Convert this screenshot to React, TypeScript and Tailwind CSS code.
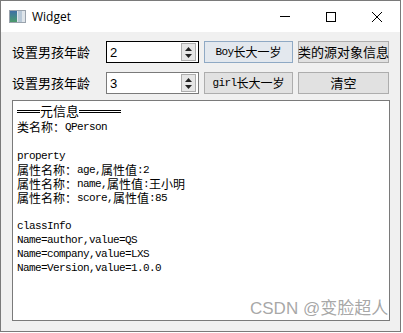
import { FC } from "react";

const SpinBox: FC<{ value: string; focused?: boolean }> = ({ value, focused }) => (
    <div className={`w-[93px] h-[22px] bg-white border flex items-center justify-between pl-[3px] pr-[2px] ${focused ? "border-black" : "border-[#7a7a7a]"}`}>
        <span className="text-[13px] font-['Liberation_Sans',sans-serif] text-black leading-none">{value}</span>
        <div className="w-[15px] h-[18px] border border-[#adadad] bg-[#e6e6e6] flex flex-col items-center justify-center gap-[3px]">
            <svg width="7" height="4" viewBox="0 0 7 4"><path d="M3.5 0 L7 4 L0 4 Z" fill="#222" /></svg>
            <svg width="7" height="4" viewBox="0 0 7 4"><path d="M0 0 L7 0 L3.5 4 Z" fill="#222" /></svg>
        </div>
    </div>
);

const Btn: FC<{ children: React.ReactNode; w: string; primary?: boolean }> = ({ children, w, primary }) => (
    <div className={`${w} h-[22px] border flex items-center justify-center text-black whitespace-nowrap ${primary ? "border-[#8fa9c4] bg-[#e3e8ee]" : "border-[#adadad] bg-[#e1e1e1]"}`}>
        {children}
    </div>
);

const CJK = /[\u3000-\u9fff\uff00-\uffef]/;

// split into latin / cjk runs so the latin part can use a narrow mono
const Mixed: FC<{ text: string }> = ({ text }) => {
    const parts = text.match(/[\u3000-\u9fff\uff00-\uffef]+|[^\u3000-\u9fff\uff00-\uffef]+/g) ?? [];
    return (
        <>
            {parts.map((p, i) =>
                CJK.test(p) ? (
                    <span key={i} className="inline-block h-[14px] leading-[14px] align-top font-['Noto_Sans_CJK_SC',sans-serif] text-[12px]">{p}</span>
                ) : (
                    <span key={i} className="inline-block h-[14px] leading-[14px] align-top font-['Liberation_Mono',monospace] text-[11px] tracking-[-0.6px]">{p}</span>
                )
            )}
        </>
    );
};

const DoubleRule: FC<{ w: string }> = ({ w }) => (
    <span className={`inline-block ${w} h-[3px] border-y border-black`}></span>
);

const lines: string[] = [
    "类名称：QPerson",
    "",
    "property",
    "属性名称：age,属性值:2",
    "属性名称：name,属性值:王小明",
    "属性名称：score,属性值:85",
    "",
    "classInfo",
    "Name=author,value=QS",
    "Name=company,value=LXS",
    "Name=Version,value=1.0.0",
];

const App: FC = () => {
    return (
        <div className="w-[403px] h-[333px] bg-white relative overflow-hidden">
            <div className="w-[401px] h-[332px] border border-[#7a7a7a] flex flex-col bg-[#f0f0f0]">
                {/* title bar */}
                <div className="h-[31px] bg-white flex items-center shrink-0">
                    <div className="ml-[8px] w-[17px] h-[13px] border border-[#9aa3ad] bg-[#dfe5ea] flex">
                        <div className="w-[7px] h-full bg-gradient-to-b from-[#3f6fa5] to-[#4c9a6a]"></div>
                        <div className="w-[4px] h-full bg-[#b9c9d8] ml-[1px]"></div>
                    </div>
                    <span className="ml-[6px] text-[12px] font-['Open_Sans','Liberation_Sans',sans-serif] text-black">Widget</span>
                    <div className="flex-1"></div>
                    <div className="w-[46px] h-[31px] flex items-center justify-center">
                        <div className="w-[10px] h-px bg-black"></div>
                    </div>
                    <div className="w-[46px] h-[31px] flex items-center justify-center">
                        <div className="w-[10px] h-[10px] border border-black"></div>
                    </div>
                    <div className="w-[46px] h-[31px] flex items-center justify-center">
                        <svg width="10" height="10" viewBox="0 0 10 10"><path d="M0 0 L10 10 M10 0 L0 10" stroke="#000" strokeWidth="1" /></svg>
                    </div>
                </div>

                {/* client area */}
                <div className="flex-1 flex flex-col pt-[9px] pl-[11px] pr-[9px] pb-[10px] gap-[6px]">
                    <div className="flex flex-col gap-[9px]">
                        <div className="flex items-center">
                            <span className="w-[94px] text-[13px] font-['Noto_Sans_CJK_SC',sans-serif] text-black">设置男孩年龄</span>
                            <SpinBox value="2" focused />
                            <Btn w="w-[89px] ml-[5px]" primary><Mixed text="Boy长大一岁" /></Btn>
                            <Btn w="w-[91px] ml-[5px]"><span className="text-[13px] font-['Noto_Sans_CJK_SC',sans-serif]">类的源对象信息</span></Btn>
                        </div>
                        <div className="flex items-center">
                            <span className="w-[94px] text-[13px] font-['Noto_Sans_CJK_SC',sans-serif] text-black">设置男孩年龄</span>
                            <SpinBox value="3" />
                            <Btn w="w-[89px] ml-[5px]"><Mixed text="girl长大一岁" /></Btn>
                            <Btn w="w-[91px] ml-[5px]"><span className="text-[13px] font-['Noto_Sans_CJK_SC',sans-serif]">清空</span></Btn>
                        </div>
                    </div>
                    <div className="w-[378px] flex-1 bg-white border border-[#7a7a7a] pl-[4px] pt-[2px] leading-[14px] text-black">
                        <div className="h-[16px] flex items-center whitespace-pre">
                            <DoubleRule w="w-[23px]" />
                            <span className="leading-[16px] font-['Noto_Sans_CJK_SC',sans-serif] text-[13px]">元信息</span>
                            <DoubleRule w="w-[42px]" />
                        </div>
                        {lines.map((line, i) => (
                            <div key={i} className={`${i === 0 ? "h-[16px] pt-[1px]" : "h-[14px]"} whitespace-pre`}><Mixed text={line} /></div>
                        ))}
                    </div>
                </div>
            </div>
            <span className="absolute left-[250px] top-[300px] text-[17px] leading-none text-[#909090]/80 font-['Liberation_Sans','Noto_Sans_CJK_SC',sans-serif]">CSDN @变脸超人</span>
        </div>
    );
};

export default App;
